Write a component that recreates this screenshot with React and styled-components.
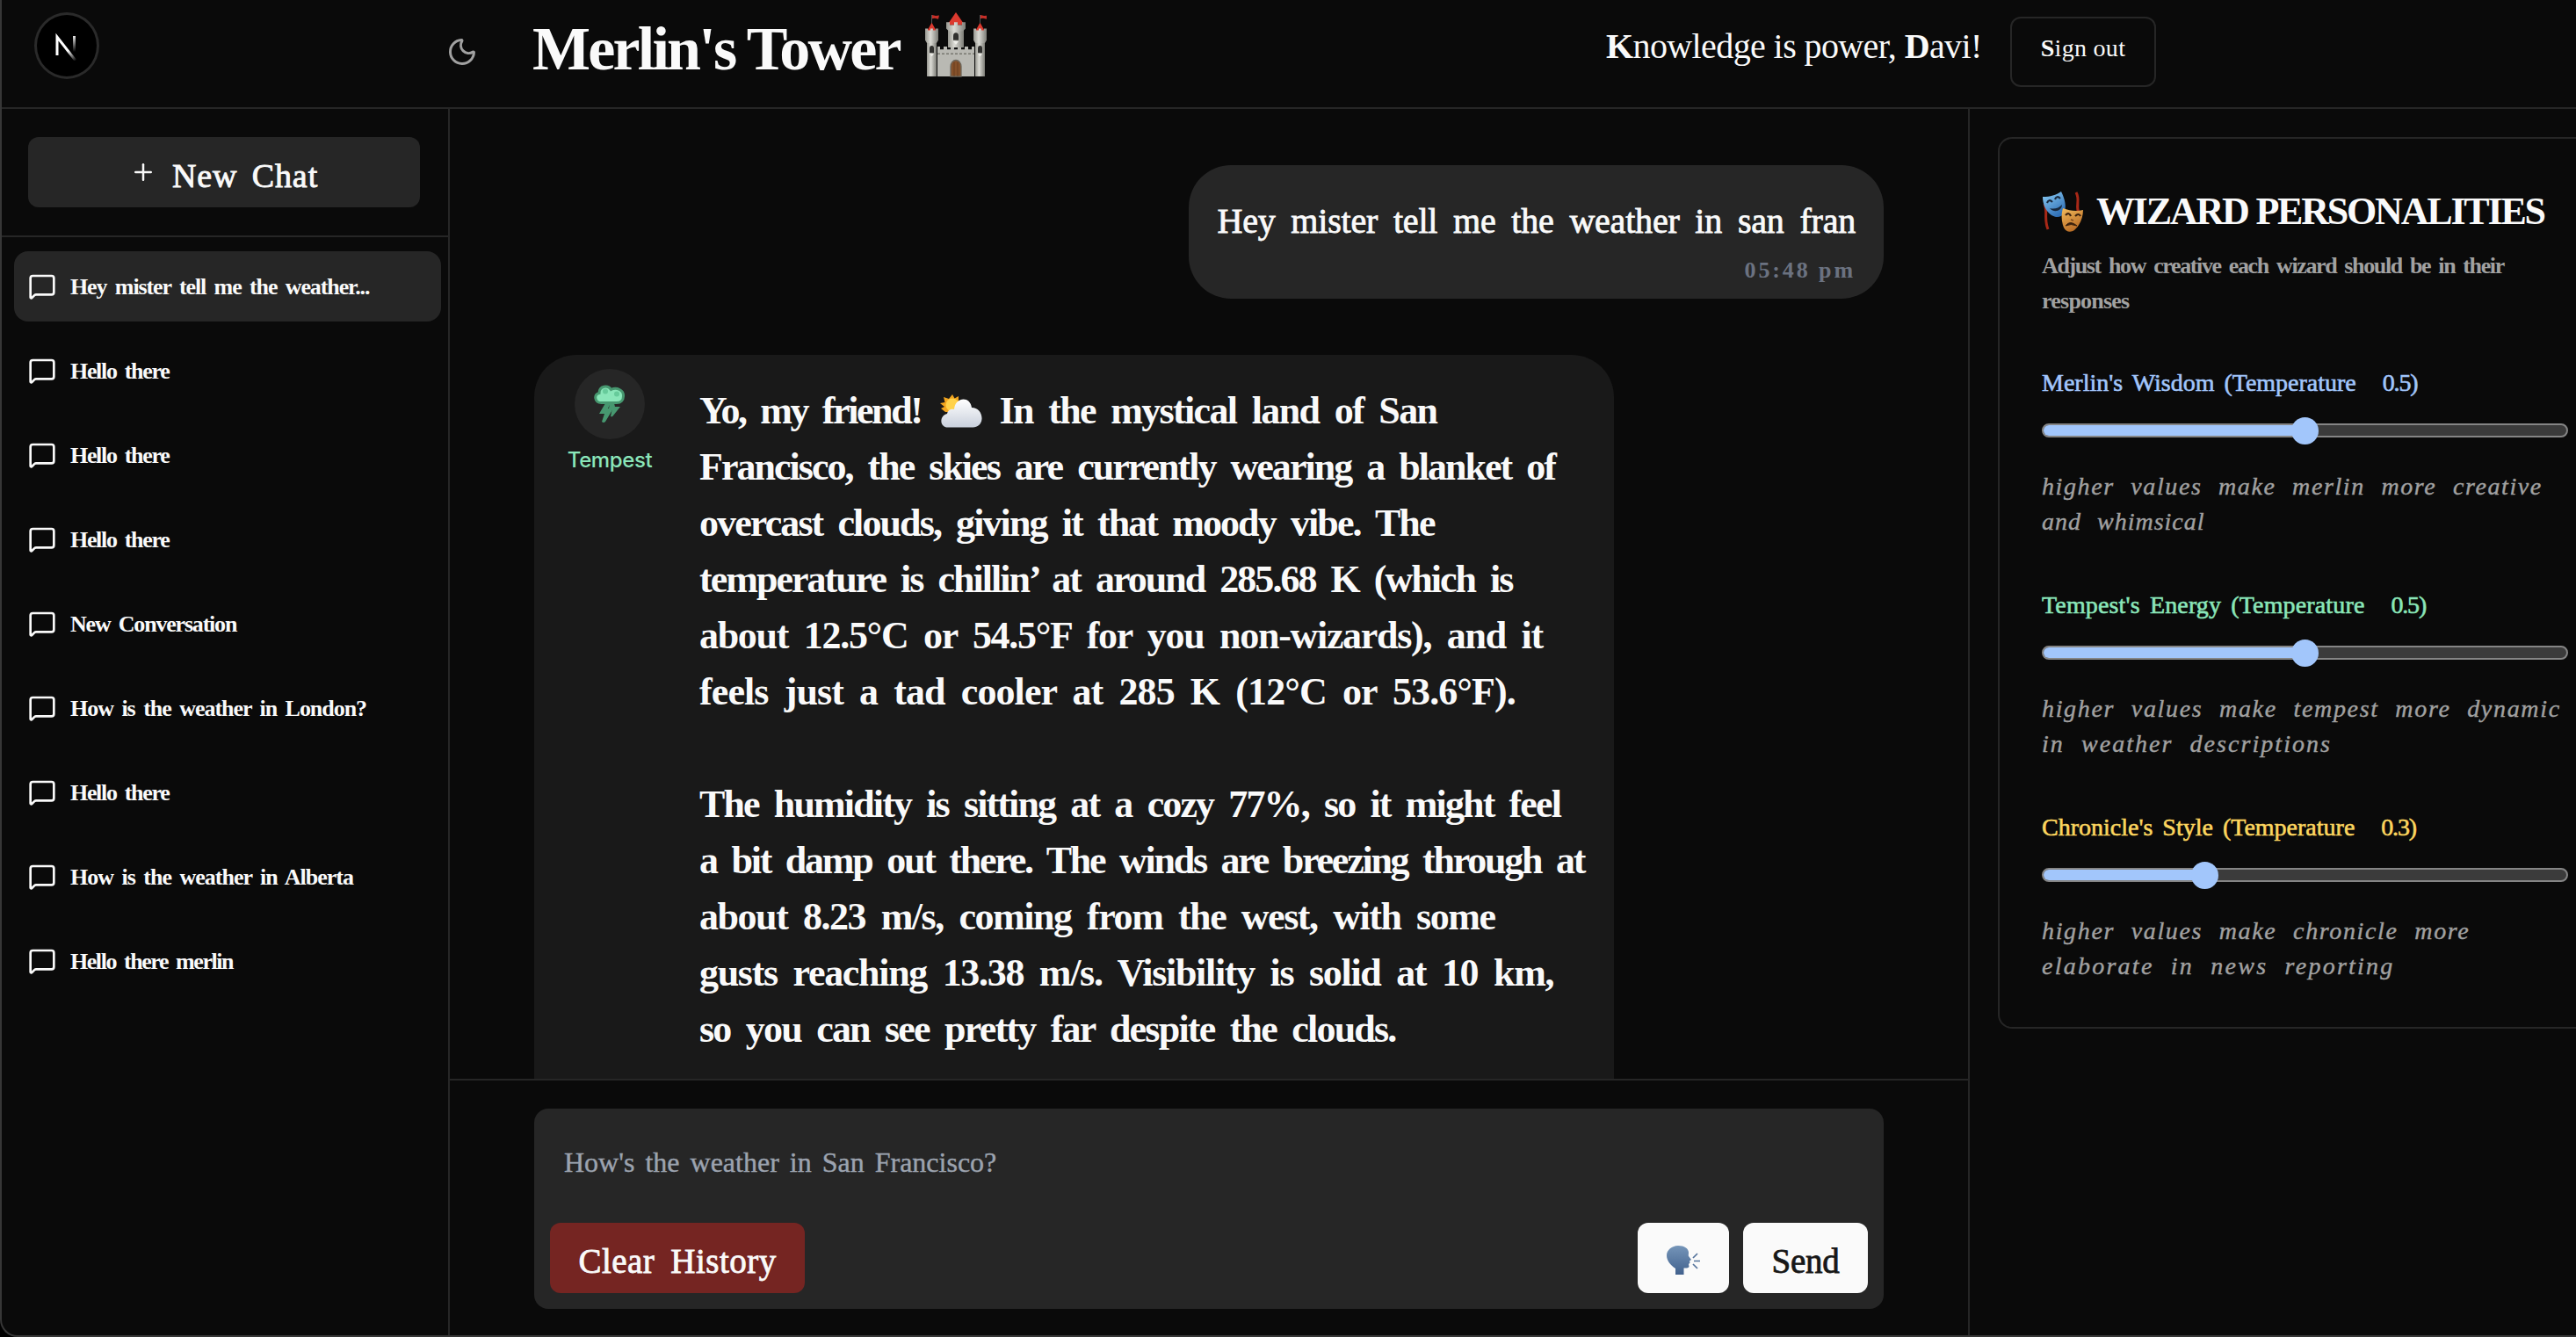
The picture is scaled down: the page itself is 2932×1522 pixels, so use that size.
import React from "react";
import styled, { createGlobalStyle } from "styled-components";
import { MessageSquare, Moon, Plus } from "lucide-react";

const c = {
  bg: "#0a0a0a",
  card: "#191919",
  muted: "#262626",
  line: "#262626",
  edge: "#373737",
  text: "#fafafa",
  soft: "#a1a1a1",
  blue: "#a2c6fb",
  green: "#8ae6b9",
  yellow: "#fcd65f",
};

const GlobalStyle = createGlobalStyle`
  * { box-sizing: border-box; }
  body { margin: 0; background: #000; }
`;

const Window = styled.div`
  display: flex;
  flex-direction: column;
  width: 2932px;
  height: 1522px;
  overflow: hidden;
  background: ${c.bg};
  color: ${c.text};
  border-left: 2px solid ${c.edge};
  border-bottom: 2px solid ${c.edge};
  border-bottom-left-radius: 20px;
  font-family: "Liberation Serif", serif;
`;

const Header = styled.header`
  display: flex;
  align-items: flex-start;
  flex: none;
  height: 124px;
  border-bottom: 2px solid ${c.line};
`;

const LogoBadge = styled.div`
  display: flex;
  align-items: center;
  justify-content: center;
  width: 74px;
  height: 76px;
  margin: 14px 0 0 37px;
  border: 3px solid #2a2a2a;
  border-radius: 50%;
  background: #000;
`;

const ThemeToggle = styled.div`
  display: flex;
  width: 36px;
  height: 36px;
  margin: 41px 0 0 395px;
  color: ${c.soft};
`;

const Title = styled.h1`
  display: flex;
  align-items: flex-start;
  width: 1222px;
  height: 96px;
  margin: 8px 0 0 62px;
  font-size: 70px;
  font-weight: 700;
  line-height: 96px;
  letter-spacing: -2.8px;
  white-space: nowrap;
`;

const CastleBox = styled.span`
  display: flex;
  margin: 6px 0 0 29px;
`;

const Greeting = styled.div`
  width: 460px;
  margin-top: 29px;
  font-size: 40px;
  line-height: 48px;
  letter-spacing: -0.6px;
  white-space: nowrap;
`;

const Initial = styled.b`
  font-weight: 700;
`;

const SignOut = styled.button`
  width: 166px;
  height: 80px;
  margin: 19px 0 0;
  padding: 0 0 8px;
  border: 2px solid ${c.line};
  border-radius: 12px;
  background: transparent;
  color: ${c.text};
  font: 28px "Liberation Serif", serif;
  letter-spacing: 0.3px;
`;

const Body = styled.div`
  display: flex;
  flex: 1;
  min-height: 0;
`;

const Sidebar = styled.aside`
  flex: none;
  width: 510px;
  border-right: 2px solid ${c.line};
`;

const NewChatArea = styled.div`
  height: 146px;
  padding: 32px 30px;
  border-bottom: 2px solid ${c.line};
`;

const NewChatButton = styled.button`
  display: flex;
  align-items: center;
  justify-content: center;
  width: 446px;
  height: 80px;
  padding: 0;
  border: 0;
  border-radius: 12px;
  background: ${c.muted};
  color: ${c.text};
  font: 38px "Liberation Serif", serif;
  letter-spacing: 0.9px;
  word-spacing: 6px;
  -webkit-text-stroke: 0.9px ${c.text};
  gap: 18px;
`;

const ButtonLabel = styled.span`
  padding-top: ${(p) => p.$drop || 0}px;
`;

const ChatList = styled.nav`
  display: flex;
  flex-direction: column;
  gap: 16px;
  padding: 16px 8px 0 14px;
`;

const ChatItem = styled.div`
  display: flex;
  align-items: center;
  gap: 16px;
  height: 80px;
  padding-left: 16px;
  border-radius: 16px;
  background: ${(p) => (p.$active ? c.muted : "transparent")};
`;

const ChatName = styled.span`
  padding-top: 2px;
  font-size: 26px;
  font-weight: 700;
  word-spacing: 4px;
  letter-spacing: ${(p) => p.$track}px;
  white-space: nowrap;
`;

const Main = styled.main`
  display: flex;
  flex-direction: column;
  flex: none;
  width: 1730px;
  border-right: 2px solid ${c.line};
`;

const Thread = styled.section`
  display: flex;
  flex-direction: column;
  height: 1104px;
  padding: 64px 96px 0;
  overflow: hidden;
`;

const UserBubble = styled.div`
  align-self: flex-end;
  flex: none;
  width: 791px;
  height: 152px;
  padding: 32px 32px 0;
  border-radius: 48px;
  background: ${c.muted};
  text-align: right;
`;

const UserText = styled.div`
  font-size: 40px;
  line-height: 64px;
  word-spacing: 8px;
  letter-spacing: -0.2px;
  white-space: nowrap;
  -webkit-text-stroke: 0.8px ${c.text};
`;

const Time = styled.div`
  margin-top: 8px;
  color: #6b7280;
  font-size: 26px;
  font-weight: 700;
  line-height: 32px;
  letter-spacing: 2.9px;
`;

const WizardBubble = styled.div`
  display: flex;
  flex: none;
  width: 1229px;
  height: 900px;
  margin-top: 64px;
  border-radius: 48px;
  background: ${c.card};
`;

const Speaker = styled.div`
  display: flex;
  flex-direction: column;
  align-items: center;
  width: 172px;
  padding-top: 16px;
`;

const Avatar = styled.div`
  display: flex;
  align-items: center;
  justify-content: center;
  width: 80px;
  height: 80px;
  border-radius: 50%;
  background: ${c.muted};
`;

const SpeakerName = styled.div`
  margin-top: 8px;
  color: ${c.green};
  font: 500 24px/32px Inter, sans-serif;
  letter-spacing: -0.4px;
`;

const Reply = styled.div`
  padding: 32px 0 0 16px;
`;

const Paragraph = styled.div`
  margin-bottom: 64px;
`;

const ReplyLine = styled.div`
  display: flex;
  align-items: center;
  height: 64px;
  font-size: 44px;
  font-weight: 700;
  line-height: 64px;
  word-spacing: 8px;
  white-space: nowrap;
  letter-spacing: ${(p) => p.$track}px;
`;

const Phrase = styled.span`
  letter-spacing: ${(p) => p.$track}px;
`;

const WeatherBox = styled.span`
  display: flex;
  margin: 0 19px 0 22px;
`;

const Footer = styled.footer`
  flex: 1;
  padding: 32px 96px 0;
  border-top: 2px solid ${c.line};
`;

const Composer = styled.div`
  display: flex;
  flex-direction: column;
  justify-content: space-between;
  height: 228px;
  padding: 41px 18px 18px;
  border-radius: 16px;
  background: ${c.muted};
`;

const Placeholder = styled.div`
  padding-left: 16px;
  color: #9ca3af;
  font-size: 32px;
  line-height: 40px;
  word-spacing: 4px;
  -webkit-text-stroke: 0.4px #9ca3af;
`;

const Actions = styled.div`
  display: flex;
  gap: 16px;
`;

const Action = styled.button`
  display: flex;
  align-items: center;
  justify-content: center;
  width: ${(p) => p.$width}px;
  height: 80px;
  margin-right: ${(p) => (p.$danger ? "auto" : 0)};
  padding: 0;
  border: 0;
  border-radius: 12px;
  background: ${(p) => (p.$danger ? "#752522" : c.text)};
  color: ${(p) => (p.$danger ? c.text : "#171717")};
  font: 39px "Liberation Serif", serif;
  word-spacing: 8px;
  letter-spacing: ${(p) => (p.$danger ? 0.46 : -0.25)}px;
  -webkit-text-stroke: 0.8px currentColor;
`;

const Panel = styled.aside`
  flex: 1;
  min-width: 0;
  padding: 32px 0 0 32px;
  overflow: hidden;
`;

const Card = styled.div`
  width: 698px;
  height: 1015px;
  padding: 50px 48px 0;
  border: 2px solid ${c.line};
  border-radius: 16px;
`;

const CardTitle = styled.h2`
  display: flex;
  align-items: center;
  gap: 13px;
  height: 66px;
  margin: 0;
  font-size: 44px;
  line-height: 48px;
  letter-spacing: -2.2px;
  text-transform: uppercase;
  white-space: nowrap;
`;

const Intro = styled.div`
  margin: 9px 0 53px;
  color: ${c.soft};
  font-size: 26px;
  font-weight: 700;
  line-height: 40px;
  word-spacing: 4px;
  white-space: nowrap;
`;

const Setting = styled.div`
  height: 253px;
`;

const SettingLabel = styled.div`
  display: flex;
  gap: 30px;
  color: ${(p) => p.$color};
  font-size: 28px;
  line-height: 40px;
  word-spacing: 4px;
  letter-spacing: ${(p) => p.$track}px;
  white-space: nowrap;
  -webkit-text-stroke: 0.6px currentColor;
`;

const Value = styled.span`
  letter-spacing: -1.2px;
`;

const Track = styled.div`
  display: flex;
  align-items: center;
  width: 599px;
  height: 16px;
  margin: 26px 0 36px;
  border: 2px solid #858585;
  border-radius: 8px;
  background: #3b3b3b;
`;

const Fill = styled.div`
  flex: none;
  width: ${(p) => p.$width}px;
  height: 12px;
  border-radius: 6px 0 0 6px;
  background: ${c.blue};
`;

const Thumb = styled.div`
  flex: none;
  width: 31px;
  height: 31px;
  margin-left: -16px;
  border-radius: 50%;
  background: ${c.blue};
`;

const Hint = styled.div`
  color: ${c.soft};
  font-size: 28px;
  font-style: italic;
  line-height: 40px;
  word-spacing: 10px;
  white-space: nowrap;
  -webkit-text-stroke: 0.4px ${c.soft};
`;

function NextLogo() {
  return (
    <svg width="30" height="34" viewBox="0 0 30 34" fill="none">
      <defs>
        <linearGradient id="nd" x1="4" y1="4" x2="27" y2="33" gradientUnits="userSpaceOnUse">
          <stop offset="0.6" stopColor="#fff" />
          <stop offset="1" stopColor="#fff" stopOpacity="0" />
        </linearGradient>
        <linearGradient id="nv" x1="0" y1="4" x2="0" y2="24" gradientUnits="userSpaceOnUse">
          <stop stopColor="#fff" />
          <stop offset="1" stopColor="#fff" stopOpacity="0" />
        </linearGradient>
      </defs>
      <path d="M4 28V7L25 34" stroke="url(#nd)" strokeWidth="3" />
      <rect x="22" y="6" width="3" height="19" fill="url(#nv)" />
    </svg>
  );
}

function Castle() {
  const side = (x) => (
    <g transform={`translate(${x} 0)`}>
      <path d="M7.500 1v12" stroke="#555" strokeWidth="1" />
      <path d="M8 1l4 1 4-.5-1 4-4-1-3 .5z" fill="#c62f28" />
      <path d="M7.500 9.500L13 19H2z" fill="#dc3a2f" />
      <path d="M0 16h3v2h3v-2h3v2h3v-2h3v13l-2 3H2l-2-3z" fill="url(#stone)" />
      <path d="M2 32h11v37H2z" fill="url(#stone)" />
      <path d="M5 43v-5a2.500 3 0 0 1 5 0v5z" fill="#30302e" />
      <path d="M5 44h5l-2.500 3z" fill="#efefea" />
    </g>
  );
  return (
    <svg width="70" height="74" viewBox="0 -2 70 72" preserveAspectRatio="none">
      <defs>
        <linearGradient id="stone">
          <stop stopColor="#96968f" />
          <stop offset="0.4" stopColor="#dcdcd6" />
          <stop offset="1" stopColor="#7c7c76" />
        </linearGradient>
      </defs>
      <path d="M14 36h3v3h4v-3h4v3h4v-3h4v3h4v-3h4v3h4v-3h4v3h4v-3h3v33H14z" fill="#b9b9b3" />
      <path d="M14 44h42" stroke="#77776f" strokeWidth="1.500" strokeDasharray="3 2" />
      <path d="M26 16h18v21H26z" fill="url(#stone)" />
      <path d="M35-2l10 14H25z" fill="#dc3a2f" />
      <path d="M24 9h4v3h5V9h4v3h5V9h4v7l-3 3H27l-3-3z" fill="url(#stone)" />
      <path d="M32 29v-5a3 3.500 0 0 1 6 0v5z" fill="#30302e" />
      <path d="M32 30h6l-3 4z" fill="#efefea" />
      {side(0)}
      {side(55)}
      <path d="M29 69V58a6 7 0 0 1 12 0v11z" fill="#85512a" stroke="#6d685e" strokeWidth="1.300" />
      <path d="M33 53v16M37 53v16" stroke="#5a3318" strokeWidth="0.600" />
    </svg>
  );
}

function Masks() {
  return (
    <svg width="49" height="49" viewBox="0 0 49 49">
      <defs>
        <linearGradient id="joy" x2="0.6" y2="1">
          <stop stopColor="#8fd0f7" />
          <stop offset="1" stopColor="#2f6fb5" />
        </linearGradient>
        <linearGradient id="woe" x2="0.5" y2="1">
          <stop stopColor="#f3bb5c" />
          <stop offset="1" stopColor="#b96c25" />
        </linearGradient>
      </defs>
      <path d="M3 15c4 9-1 17 4 29" stroke="#a82817" strokeWidth="3" fill="none" />
      <path d="M39 2c5 9-1 14 3 24" stroke="#a82817" strokeWidth="3" fill="none" />
      <path d="M1 7c9 0 15-2 21-6 4 8 7 18 3 25-3 5-9 5-14 2C4 23 1 15 1 7z" fill="url(#joy)" />
      <path d="M6 14q2-5 6-1M15 10q2-5 6-1" stroke="#18283c" strokeWidth="2.200" fill="none" />
      <path d="M9 20q8 2 14-4c0 7-9 10-14 4z" fill="#18283c" />
      <path d="M24 20c8 3 15 4 23 2 0 9-4 18-10 23-4 3-10 2-12-3-3-7-3-15-1-22z" fill="url(#woe)" />
      <path d="M27 28q4-4 6 1M38 29q4-4 6 0" stroke="#3b210e" strokeWidth="2.200" fill="none" />
      <path d="M27 40q5-7 13 0q-7-3-13 0z" fill="#3b210e" stroke="#3b210e" />
      <path d="M33 33l3 1" stroke="#79461d" strokeWidth="1.500" />
    </svg>
  );
}

function StormCloud() {
  return (
    <svg width="36" height="44" viewBox="0 0 36 44">
      <path
        d="M8.500 20.500C.5 20.500-.5 10.500 6 9.500 6 1 16 0 19.500 5.500 26 2.500 34 6 33.500 13c0 4.500-3 7.500-7.500 7.500z"
        fill="#8ae6b9"
        stroke="#479870"
        strokeWidth="3"
      />
      <circle cx="13" cy="7.500" r="3" fill="#67cb9b" />
      <circle cx="26" cy="10.500" r="3" fill="#67cb9b" />
      <path d="M13 21h6l-3 6h6L13 42q-2 2-4 0l3-9H6z" fill="#479870" />
      <path d="M23 21h-5l-1 6h4l-2 9q2 1 3-1l8-10h-6z" fill="#479870" />
    </svg>
  );
}

function SunCloud() {
  return (
    <svg width="48" height="38" viewBox="0 0 48 38">
      <defs>
        <linearGradient id="puff" x2="0" y2="1">
          <stop stopColor="#ffffff" />
          <stop offset="1" stopColor="#c9d0dc" />
        </linearGradient>
      </defs>
      <path
        d="M14 0l2.500 4.500L21 2l0 5 6 0-3 5 1 8H6l-5-4 4-2-5-4 5.500-1L4 3l6 2z"
        fill="#f2a51f"
      />
      <circle cx="14" cy="12" r="7.500" fill="#ffd24a" />
      <path
        d="M9 37.500C-1 37.500-1 24 8 22 9 17 13 16 16 17 17 3 34 1 36 15c7 0 12 6 11.500 13-.5 6-5 9.500-10 9.500z"
        fill="url(#puff)"
      />
    </svg>
  );
}

function SpeakingHead() {
  return (
    <svg width="38" height="34" viewBox="0 0 38 34">
      <defs>
        <linearGradient id="head" x2="0" y2="1">
          <stop stopColor="#7595b9" />
          <stop offset="1" stopColor="#41618d" />
        </linearGradient>
      </defs>
      <path
        d="M13 0c7 0 12 3 12 8 0 2-.5 3 0 4l3 4-2 1.500.5 2-1.500 1.500.5 3c-1 2-4 1.500-6 1.500V33H10v-7C4 22 0 17 0 11 0 5 6 0 13 0z"
        fill="url(#head)"
      />
      <path d="M30 14l5-5M31 17.500h7M30 21l5 5" stroke="#56749c" strokeWidth="1.700" />
    </svg>
  );
}

const chats = [
  ["Hey mister tell me the weather...", -1.1],
  ["Hello there", -1.33],
  ["Hello there", -1.33],
  ["Hello there", -1.33],
  ["New Conversation", -1.2],
  ["How is the weather in London?", -1.03],
  ["Hello there", -1.33],
  ["How is the weather in Alberta", -1],
  ["Hello there merlin", -1.45],
];

const forecast = [
  ["Francisco, the skies are currently wearing a blanket of", -1.98],
  ["overcast clouds, giving it that moody vibe. The", -1.9],
  ["temperature is chillin’ at around 285.68 K (which is", -1.98],
  ["about 12.5°C or 54.5°F for you non-wizards), and it", -1.3],
  ["feels just a tad cooler at 285 K (12°C or 53.6°F).", -0.9],
];

const details = [
  ["The humidity is sitting at a cozy 77%, so it might feel", -1.87],
  ["a bit damp out there. The winds are breezing through at", -2.25],
  ["about 8.23 m/s, coming from the west, with some", -1.45],
  ["gusts reaching 13.38 m/s. Visibility is solid at 10 km,", -1.31],
  ["so you can see pretty far despite the clouds.", -1.78],
];

const settings = [
  {
    label: "Merlin's Wisdom (Temperature",
    value: "0.5)",
    track: 0,
    color: c.blue,
    fill: 298,
    hint: [["higher values make merlin more creative", 1.6], ["and whimsical", 1]],
  },
  {
    label: "Tempest's Energy (Temperature",
    value: "0.5)",
    track: 0.15,
    color: c.green,
    fill: 298,
    hint: [["higher values make tempest more dynamic", 1.67], ["in weather descriptions", 2.05]],
  },
  {
    label: "Chronicle's Style (Temperature",
    value: "0.3)",
    track: 0,
    color: c.yellow,
    fill: 184,
    hint: [["higher values make chronicle more", 1.65], ["elaborate in news reporting", 2.25]],
  },
];

export default function App() {
  return (
    <Window>
      <GlobalStyle />
      <Header>
        <LogoBadge><NextLogo /></LogoBadge>
        <ThemeToggle><Moon size={36} strokeWidth={2} /></ThemeToggle>
        <Title>
          Merlin's Tower
          <CastleBox><Castle /></CastleBox>
        </Title>
        <Greeting>
          <Initial>K</Initial>nowledge is power, <Initial>D</Initial>avi!
        </Greeting>
        <SignOut><Initial>S</Initial>ign out</SignOut>
      </Header>
      <Body>
        <Sidebar>
          <NewChatArea>
            <NewChatButton>
              <Plus size={30} strokeWidth={2} />
              <ButtonLabel $drop={7}>New Chat</ButtonLabel>
            </NewChatButton>
          </NewChatArea>
          <ChatList>
            {chats.map(([name, track], i) => (
              <ChatItem key={i} $active={i === 0}>
                <MessageSquare size={32} strokeWidth={2} />
                <ChatName $track={track}>{name}</ChatName>
              </ChatItem>
            ))}
          </ChatList>
        </Sidebar>
        <Main>
          <Thread>
            <UserBubble>
              <UserText>Hey mister tell me the weather in san fran</UserText>
              <Time>05:48 pm</Time>
            </UserBubble>
            <WizardBubble>
              <Speaker>
                <Avatar><StormCloud /></Avatar>
                <SpeakerName>Tempest</SpeakerName>
              </Speaker>
              <Reply>
                <Paragraph>
                  <ReplyLine>
                    <Phrase $track={-2.4}>Yo, my friend!</Phrase>
                    <WeatherBox><SunCloud /></WeatherBox>
                    <Phrase $track={-1.65}>In the mystical land of San</Phrase>
                  </ReplyLine>
                  {forecast.map(([text, track]) => (
                    <ReplyLine key={text} $track={track}>{text}</ReplyLine>
                  ))}
                </Paragraph>
                <Paragraph>
                  {details.map(([text, track]) => (
                    <ReplyLine key={text} $track={track}>{text}</ReplyLine>
                  ))}
                </Paragraph>
              </Reply>
            </WizardBubble>
          </Thread>
          <Footer>
            <Composer>
              <Placeholder>How's the weather in San Francisco?</Placeholder>
              <Actions>
                <Action $danger $width={290}><ButtonLabel $drop={6}>Clear History</ButtonLabel></Action>
                <Action $width={104}><ButtonLabel $drop={12}><SpeakingHead /></ButtonLabel></Action>
                <Action $width={142}><ButtonLabel $drop={6}>Send</ButtonLabel></Action>
              </Actions>
            </Composer>
          </Footer>
        </Main>
        <Panel>
          <Card>
            <CardTitle><Masks />Wizard Personalities</CardTitle>
            <Intro>
              <Phrase as="div" $track={-1.38}>Adjust how creative each wizard should be in their</Phrase>
              <Phrase as="div" $track={-0.78}>responses</Phrase>
            </Intro>
            {settings.map((s) => (
              <Setting key={s.label}>
                <SettingLabel $color={s.color} $track={s.track}>
                  {s.label}
                  <Value>{s.value}</Value>
                </SettingLabel>
                <Track>
                  <Fill $width={s.fill} />
                  <Thumb />
                </Track>
                <Hint>
                  {s.hint.map(([text, track]) => (
                    <Phrase as="div" key={text} $track={track}>{text}</Phrase>
                  ))}
                </Hint>
              </Setting>
            ))}
          </Card>
        </Panel>
      </Body>
    </Window>
  );
}
